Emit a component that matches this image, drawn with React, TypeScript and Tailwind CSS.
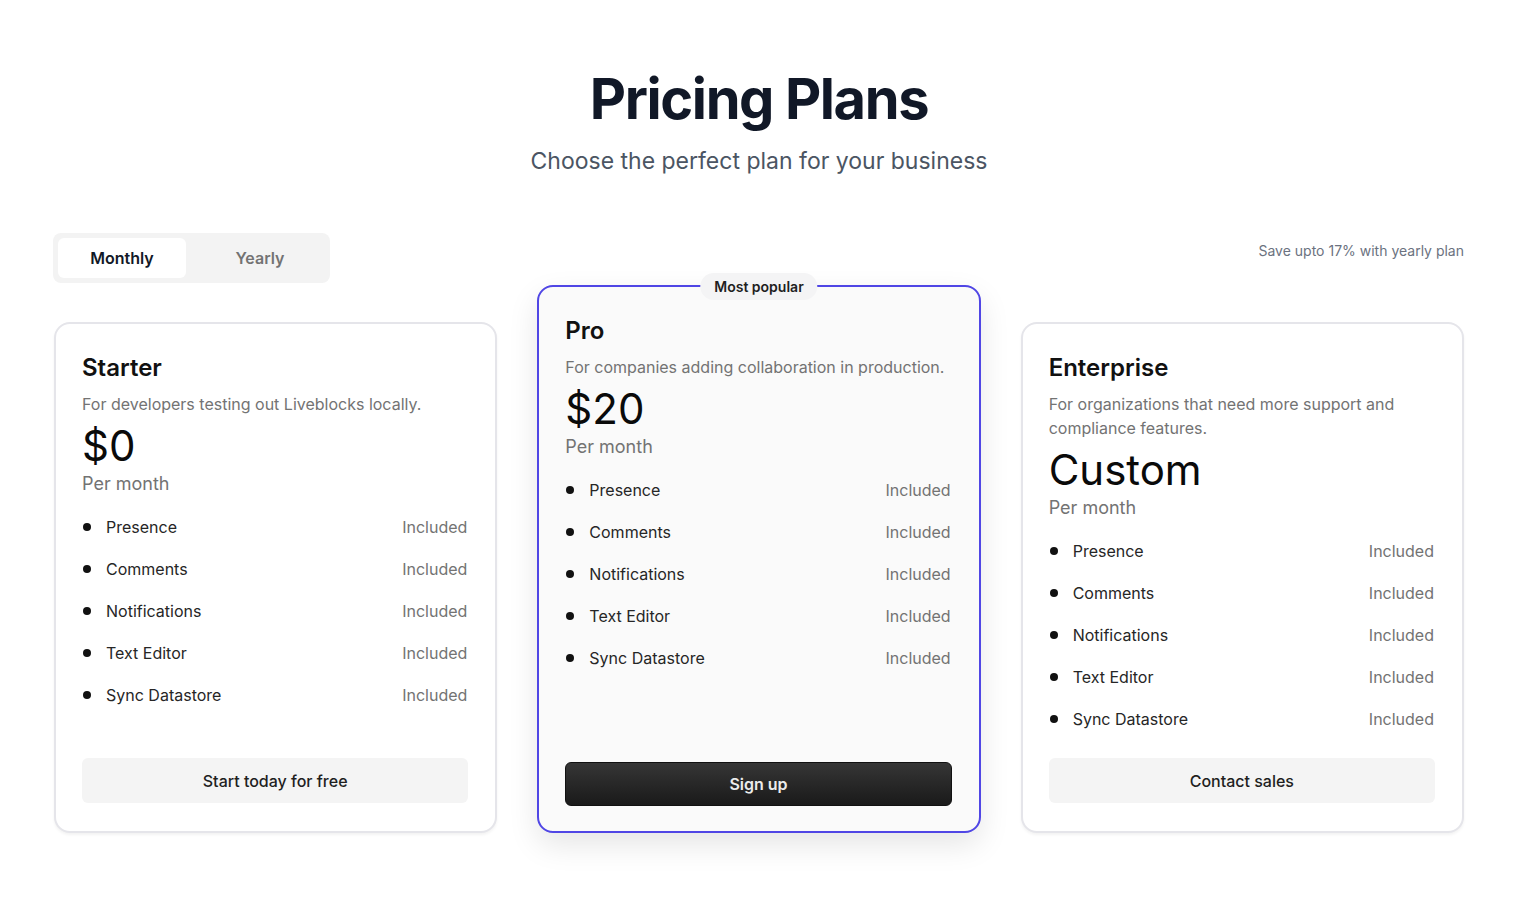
const features = ["Presence", "Comments", "Notifications", "Text Editor", "Sync Datastore"];

const plans = [
  {
    id: "starter",
    name: "Starter",
    description: "For developers testing out Liveblocks locally.",
    price: "$0",
    cta: "Start today for free",
    popular: false,
  },
  {
    id: "pro",
    name: "Pro",
    description: "For companies adding collaboration in production.",
    price: "$20",
    cta: "Sign up",
    popular: true,
  },
  {
    id: "enterprise",
    name: "Enterprise",
    description: "For organizations that need more support and compliance features.",
    price: "Custom",
    cta: "Contact sales",
    popular: false,
  },
];

export default function App() {
  return (
    <div className="min-h-screen bg-white font-['Inter',sans-serif] text-gray-900">
      <div className="mx-auto w-[1410px] pt-[69px] pb-16">
        {/* Header */}
        <div className="flex flex-col items-center">
          <h1 className="text-[56px] leading-[60px] font-bold tracking-tight text-[#111827]">Pricing Plans</h1>
          <p className="mt-4 text-[23px] leading-8 text-[#4b5563]">Choose the perfect plan for your business</p>
        </div>

        {/* Billing toggle */}
        <div className="mt-14 flex items-start justify-between">
          <div className="-ml-px flex h-[50px] w-[277px] rounded-lg bg-[#f3f3f3] p-[5px]">
            <button className="h-[40px] w-[128px] rounded-md bg-white text-base font-semibold text-[#111827]">
              Monthly
            </button>
            <button className="h-[40px] flex-1 pl-[9px] text-base font-semibold text-[#737373]">Yearly</button>
          </div>
          <span className="pt-[9px] text-sm leading-[18px] text-[#6b7280]">Save upto 17% with yearly plan</span>
        </div>

        {/* Cards */}
        <div className="mt-[39px] grid grid-cols-3 gap-10">
          {plans.map((plan) => (
            <div
              key={plan.id}
              className={
                plan.popular
                  ? "relative -mt-[37px] flex flex-col rounded-2xl border-2 border-[#5046e5] bg-[#fafafa] pt-7 pr-[27px] pb-[25px] pl-[26px] shadow-[0_12px_30px_rgba(0,0,0,0.10)]"
                  : "relative flex flex-col rounded-2xl border-2 border-[#e5e5ea] bg-white py-7 pr-[27px] pl-[26px] shadow-[0_2px_3px_rgba(0,0,0,0.05)]"
              }
            >
              {plan.popular && (
                <span className="absolute -top-[14px] left-1/2 -translate-x-1/2 rounded-full bg-[#f4f4f5] px-[14px] py-[4px] text-sm leading-[19px] font-semibold text-[#1f1f1f]">
                  Most popular
                </span>
              )}
              <h2 className="text-2xl leading-8 font-semibold text-[#111111]">{plan.name}</h2>
              <p className="mt-2 text-base leading-6 text-[#737373]">{plan.description}</p>
              <div className="mt-1.5 text-[42px] leading-[48px] font-normal text-[#0a0a0a]">{plan.price}</div>
              <div className="text-lg leading-7 text-[#737373]">Per month</div>

              <ul className="mt-2">
                {features.map((f) => (
                  <li key={f} className="flex h-[42px] items-center justify-between">
                    <span className="flex items-center text-base text-[#262626]">
                      <span className="mr-[15px] ml-px h-2 w-2 rounded-full bg-[#111111]" />
                      {f}
                    </span>
                    <span className="pr-px text-base text-[#737373]">Included</span>
                  </li>
                ))}
              </ul>

              <div className="mt-auto pt-[18px]">
                {plan.popular ? (
                  <button className="h-[44px] w-full rounded-md border border-[#111] bg-gradient-to-b from-[#363636] to-[#1a1a1a] text-base font-semibold text-[#ececec]">
                    {plan.cta}
                  </button>
                ) : (
                  <button className="h-[45px] w-full rounded-md bg-[#f4f4f4] text-base font-medium text-[#1f1f1f]">
                    {plan.cta}
                  </button>
                )}
              </div>
            </div>
          ))}
        </div>
      </div>
    </div>
  );
}
